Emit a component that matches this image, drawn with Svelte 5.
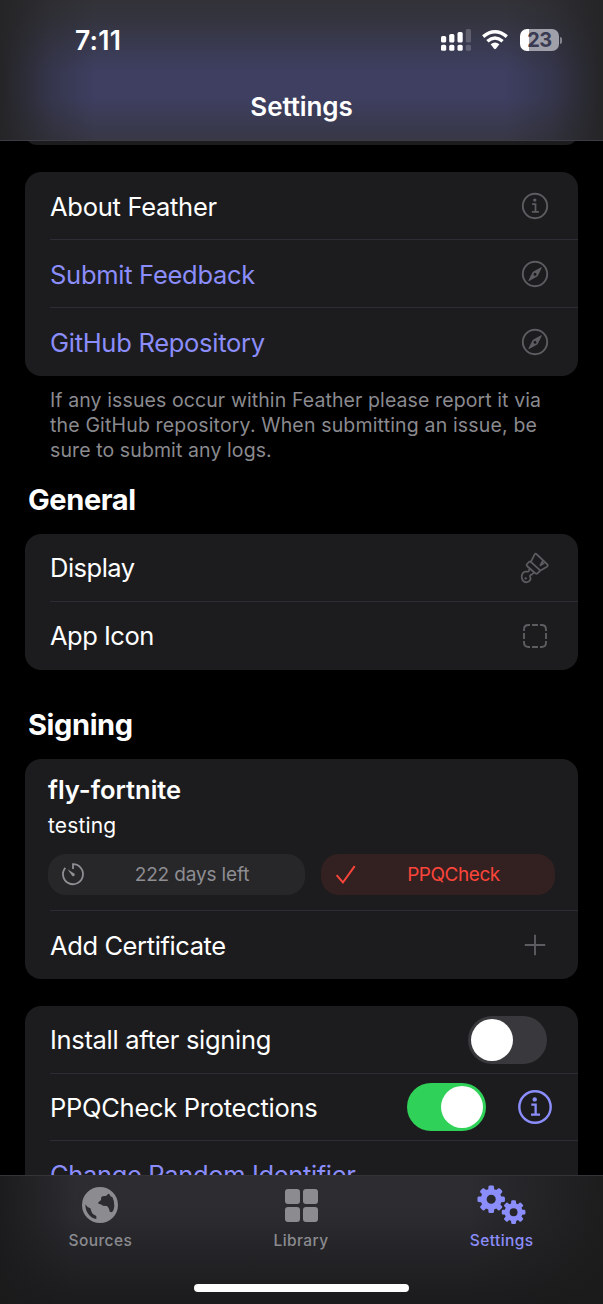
<script>
  // Outline of a cog with eight rounded teeth.
  function gear(cx, cy, r) {
    const teeth = 8;
    const step = (Math.PI * 2) / teeth;
    const inner = r * 0.76;
    const at = (radius, a) =>
      `${(cx + radius * Math.sin(a)).toFixed(2)} ${(cy - radius * Math.cos(a)).toFixed(2)}`;
    let d = '';
    for (let i = 0; i < teeth; i++) {
      const a = i * step;
      d += `${i ? 'L' : 'M'}${at(inner, a - 0.28)}L${at(r * 0.93, a - 0.22)}Q${at(r * 1.01, a - 0.19)} ${at(r, a - 0.1)}L${at(r, a + 0.1)}Q${at(r * 1.01, a + 0.19)} ${at(r * 0.93, a + 0.22)}L${at(inner, a + 0.28)}`;
    }
    const h = r * 0.33;
    return `${d}ZM${cx - h} ${cy}a${h} ${h} 0 1 0 ${2 * h} 0a${h} ${h} 0 1 0 ${-2 * h} 0Z`;
  }

  const links = [
    { label: 'About Feather', icon: 'info', accent: false, ls: -0.28 },
    { label: 'Submit Feedback', icon: 'compass', accent: true, ls: -0.28 },
    { label: 'GitHub Repository', icon: 'compass', accent: true, ls: -0.28 }
  ];
  const general = [
    { label: 'Display', icon: 'brush', ls: -0.5 },
    { label: 'App Icon', icon: 'dashed', ls: -0.5 }
  ];
</script>

{#snippet icon(name)}
  {#if name === 'info'}
    <svg class="icon" viewBox="0 0 28 28">
      <circle cx="14" cy="14" r="12.2" stroke-width="1.9" />
      <circle class="dot" cx="13.8" cy="8.1" r="1.7" />
      <path d="M11.1 12.1h3.4v7.6M10.9 19.9h7" stroke-width="1.8" />
    </svg>
  {:else if name === 'compass'}
    <svg class="icon" viewBox="0 0 28 28">
      <circle cx="14" cy="14" r="12.2" stroke-width="1.9" />
      <path class="dot" fill-rule="evenodd" d="M20.1 7.3Q21.1 7 20.7 8L17 15.5Q16.6 16.4 15.8 16.8L8.2 20.9Q7 21.3 7.5 20.2L11.3 12.7Q11.7 12 12.4 11.5ZM14 12.7a1.5 1.5 0 1 0 0 3a1.5 1.5 0 1 0 0-3Z" />
    </svg>
  {:else if name === 'brush'}
    <svg class="brush" viewBox="65 36 84 96">
      <path d="M83 72L90 65Q94 64 97 68L120 89Q123 93 119 96L114 100Q111 103 107 99L83 78Q80 75 83 72ZM95 65L106 43Q108 39 111 42L144 73Q147 77 143 80L122 92M131 61L123 76L133 70M90 85L89 92Q88 96 83 95L79 95Q69 96 67 109Q67 125 80 127Q91 126 94 117L92 109Q92 104 97 104L104 98" />
      <circle class="dot" cx="79" cy="115" r="3.5" />
    </svg>
  {:else if name === 'dashed'}
    <svg class="dashed" viewBox="0 0 24 24">
      <path d="M1 7V5.5Q1 1 5.5 1H7M17 1h1.5Q23 1 23 5.5V7M23 17v1.5Q23 23 18.500 23H17M7 23H5.500Q1 23 1 18.500V17M9 1h6M9 23h6M1 9v6M23 9v6" />
    </svg>
  {:else if name === 'plus'}
    <svg class="plus" viewBox="0 0 22 22"><path d="M11 .8v20.400M.8 11h20.400" /></svg>
  {/if}
{/snippet}

<div class="screen">
  <header>
    <div class="status">
      <span class="time">7:11</span>
      <div class="indicators">
        <svg class="signal" viewBox="0 0 30 22">
          <rect x="0" y="7" width="5.200" height="6.500" rx="1.600" /><rect x="0" y="15.800" width="5.200" height="6" rx="1.600" />
          <rect x="8.200" y="5" width="5.200" height="8.500" rx="1.600" /><rect x="8.200" y="15.800" width="5.200" height="6" rx="1.600" />
          <rect x="16.500" y="3" width="5.200" height="10.500" rx="1.600" /><rect x="16.500" y="15.800" width="5.200" height="6" rx="1.600" />
          <g opacity=".2"><rect x="24.800" y="0" width="5.200" height="13.500" rx="1.600" /><rect x="24.800" y="15.800" width="5.200" height="6" rx="1.600" /></g>
        </svg>
        <svg class="wifi" viewBox="0 0 26 20">
          <path class="arc" d="M1.200 6.600Q13-3.200 24.800 6.600M5.400 11.200Q13 4.800 20.600 11.200" />
          <path d="M8.600 14.200Q13 11 17.400 14.200L13.900 18.800Q13 19.600 12.100 18.800Z" />
        </svg>
        <div class="battery"><span>23</span></div>
        <i class="nub"></i>
      </div>
    </div>
    <h1>Settings</h1>
  </header>

  <main>
    <div class="card previous"></div>

    <section class="card links">
      {#each links as row}
        <div class="row" class:accent={row.accent}>
          <span style="letter-spacing: {row.ls}px">{row.label}</span>
          {@render icon(row.icon)}
        </div>
      {/each}
    </section>
    <p class="note">
      <span class="l1">If any issues occur within Feather please report it via</span><br />
      <span class="l2">the GitHub repository. When submitting an issue, be</span><br />
      <span class="l3">sure to submit any logs.</span>
    </p>

    <h2 class="h-general">General</h2>
    <section class="card">
      {#each general as row}
        <div class="row">
          <span style="letter-spacing: {row.ls}px">{row.label}</span>
          {@render icon(row.icon)}
        </div>
      {/each}
    </section>

    <h2 class="h-signing">Signing</h2>
    <section class="card">
      <div class="cert">
        <strong>fly-fortnite</strong>
        <span class="sub">testing</span>
        <div class="pills">
          <div class="pill days">
            <svg viewBox="0 0 24 24">
              <path d="M12 7V2.200A10 10 0 1 1 4.300 5.800" />
              <path class="dot" d="M6.500 7.300L13.600 11.800A1.700 1.700 0 0 1 11.300 14.100Z" />
            </svg>
            <span>222 days left</span>
          </div>
          <div class="pill check">
            <svg viewBox="0 0 24 24"><path d="M2.600 13.200L8.900 20.500L20.700 4.200" /></svg>
            <span>PPQCheck</span>
          </div>
        </div>
      </div>
      <div class="row">
        <span class="add">Add Certificate</span>
        {@render icon('plus')}
      </div>
    </section>

    <section class="card options">
      <div class="row toggle-row">
        <span class="install">Install after signing</span>
        <div class="switch"><i></i></div>
      </div>
      <div class="row protect">
        <span class="ppq">PPQCheck Protections</span>
        <div class="controls">
          <div class="switch on"><i></i></div>
          {@render icon('info')}
        </div>
      </div>
      <div class="row accent"><span class="change">Change Random Identifier</span></div>
    </section>
  </main>

  <nav>
    <div class="tabs">
      <div class="tab">
        <svg class="globe" viewBox="246 141 108 108">
          <path fill-rule="evenodd" d="M300 141a54 54 0 1 0 0 108a54 54 0 1 0 0-108ZM294 188L303 180L304 171Q308 167 318 168L325 161L330 164L331 169L337 171Q344 184 343 199Q342 211 336 217L329 215Q327 201 320 198L309 197Q304 192 296 191ZM256 193Q260 201 271 205L276 219Q279 223 289 228L289 237Q275 236 265 222Q256 210 256 193Z" />
        </svg>
        <span>Sources</span>
      </div>
      <div class="tab">
        <svg class="grid" viewBox="0 0 33 33">
          <rect width="15" height="15" rx="3" /><rect x="18" width="15" height="15" rx="3" />
          <rect y="18" width="15" height="15" rx="3" /><rect x="18" y="18" width="15" height="15" rx="3" />
        </svg>
        <span>Library</span>
      </div>
      <div class="tab active">
        <svg class="gears" viewBox="0 0 50 40">
          <path fill-rule="evenodd" d={gear(14.2, 14.3, 13.8)} />
          <path fill-rule="evenodd" d={gear(36.600, 27.200, 11.900)} />
        </svg>
        <span>Settings</span>
      </div>
    </div>
    <div class="home"></div>
  </nav>
</div>

<style>
  :global(body) { background: #000; }
  * { box-sizing: border-box; }
  .screen {
    display: flex;
    flex-direction: column;
    width: 603px;
    height: 1304px;
    overflow: hidden;
    background: #000;
    color: #fff;
    font-family: Inter, 'Liberation Sans', sans-serif;
  }
  svg { display: block; flex: none; overflow: visible; }
  header {
    flex: none;
    height: 141px;
    background:
      linear-gradient(90deg, #252527 0, rgba(37, 37, 39, 0.78) 20px, rgba(37, 37, 39, 0.35) 52px, rgba(37, 37, 39, 0) 95px, rgba(37, 37, 39, 0) 505px, rgba(37, 37, 39, 0.35) 551px, rgba(37, 37, 39, 0.78) 583px, #252527 100%),
      linear-gradient(#323238 0, #34343f 20px, #393a50 45px, #3e3f61 72px, #3e3f61 98px, #3a3a50 124px, #373746 100%);
    border-bottom: 1px solid #3c3c45;
  }
  .status {
    display: flex;
    justify-content: space-between;
    align-items: center;
    height: 80px;
    padding: 0 41px 0 75px;
  }
  .time { font-size: 26.500px; font-weight: 600; letter-spacing: 0.2px; }
  .indicators { display: flex; align-items: center; }
  .signal { width: 30px; height: 22px; fill: #fff; margin-right: 11px; }
  .wifi { width: 26px; height: 20px; fill: #fff; margin-right: 12px; }
  .arc { fill: none; stroke: #fff; stroke-width: 3.400; }
  .battery {
    display: flex;
    justify-content: center;
    align-items: center;
    width: 39px;
    height: 22px;
    border-radius: 7px;
    background: linear-gradient(90deg, #fff 9px, #a0a0ab 9px);
    color: #3a3b52;
    font-size: 20px;
    font-weight: 700;
    letter-spacing: -0.5px;
  }
  .nub { width: 2px; height: 7px; margin-left: 1px; border-radius: 0 3px 3px 0; background: #85858f; }
  h1 {
    margin: 10px 0 0;
    text-align: center;
    font-size: 26px;
    line-height: 34px;
    font-weight: 600;
    letter-spacing: -0.1px;
  }
  main { flex: 1; min-height: 0; overflow: hidden; padding: 0 25px; }
  .card { border-radius: 16px; background: #1c1c1e; overflow: hidden; }
  .previous { height: 24px; margin-top: -20px; }
  .links { margin-top: 27px; }
  .row {
    display: flex;
    align-items: center;
    justify-content: space-between;
    height: 68px;
    padding: 0 29px 0 25px;
    font-size: 25.500px;
    white-space: nowrap;
  }
  .row:not(:last-child), .cert { background: linear-gradient(#2d2d35, #2d2d35) 25px 100% / 100% 1px no-repeat; }
  .accent { color: #8b8dfa; }
  .icon { width: 28px; height: 28px; fill: none; stroke: #5c5c61; }
  .icon .dot { fill: #5c5c61; stroke: none; }
  .brush { width: 28px; height: 32px; fill: none; stroke: #5c5c61; stroke-width: 5.200; stroke-linejoin: round; stroke-linecap: round; }
  .brush .dot { fill: #5c5c61; stroke: none; }
  .dashed { width: 24px; height: 24px; margin-right: 2px; fill: none; stroke: #5c5c61; stroke-width: 1.900; }
  .plus { width: 22px; height: 22px; margin-right: 3px; stroke: #5c5c61; stroke-width: 1.900; }
  .note {
    margin: 12px 0 0;
    padding-left: 25px;
    height: 74px;
    color: #8a8a8f;
    font-size: 19.500px;
    line-height: 25px;
    white-space: nowrap;
    letter-spacing: 0.100px;
  }
  .l2 { letter-spacing: 0.160px; }
  h2 { margin: 0 0 0 3px; font-size: 29px; font-weight: 700; line-height: 40px; letter-spacing: -0.4px; }
  .h-general { margin-top: 18px; margin-bottom: 13.500px; }
  .h-signing { margin-top: 35.500px; margin-bottom: 13.500px; }
  .cert { height: 152.500px; padding: 15.500px 23px 0; }
  .cert strong { display: block; font-size: 25.500px; line-height: 32px; font-weight: 600; }
  .sub { display: block; margin-top: 6px; font-size: 21px; line-height: 27px; letter-spacing: 0.150px; }
  .pills { display: flex; gap: 16px; margin-top: 14.500px; }
  .pill { display: flex; align-items: center; height: 41px; padding-left: 13px; border-radius: 18px; background: #272729; color: #8e8e93; font-size: 19px; }
  .pill svg { width: 24px; height: 24px; fill: none; stroke: currentColor; stroke-width: 1.800; }
  .pill .dot { fill: currentColor; stroke: none; }
  .pill span { flex: 1; text-align: center; }
  .days { width: 257px; padding-right: 6px; }
  .days span { letter-spacing: -0.150px; }
  .check { width: 234px; padding-right: 6px; background: #332021; color: #fa453a; }
  .check span { letter-spacing: -0.450px; }
  .check svg { stroke-width: 2; }
  .add { letter-spacing: -0.400px; }
  .install { letter-spacing: -0.310px; }
  .ppq { letter-spacing: -0.280px; }
  .change { letter-spacing: -0.350px; }
  .options { margin-top: 27px; }
  .options .row { height: 67.500px; }
  .switch { width: 79px; height: 48px; padding: 3px; border-radius: 24px; background: #39393d; }
  .switch i { display: block; width: 42px; height: 42px; border-radius: 50%; background: #fff; }
  .on { display: flex; justify-content: flex-end; background: #30d158; }
  .toggle-row { padding-right: 31px; }
  .controls { display: flex; align-items: center; gap: 31px; }
  .protect { padding-right: 25px; }
  .protect .icon { width: 36px; height: 36px; margin-right: 0; stroke: #8b8dfa; }
  .protect .icon :global(.dot) { fill: #8b8dfa; }
  nav {
    flex: none;
    height: 129px;
    border-top: 1px solid #333338;
    background:
      linear-gradient(90deg, rgba(26, 26, 27, 0.900) 0, rgba(30, 30, 31, 0) 75px, rgba(30, 30, 31, 0) 470px, rgba(26, 26, 26, 0.850) 100%),
      linear-gradient(#2c2c31 0, #2b2b30 40px, #1d1d1f 115px, #1b1b1d 100%);
  }
  .tabs { display: flex; height: 108px; padding: 9px 1px 0 0; }
  .tab { display: flex; flex: 1; flex-direction: column; align-items: center; color: #8b8b90; font-size: 15.500px; font-weight: 500; line-height: 20px; letter-spacing: 0.400px; }
  .tab svg { fill: currentColor; margin-bottom: 9px; }
  .tab .globe { width: 36px; height: 36px; margin-top: 2px; margin-bottom: 8px; }
  .tab .grid { width: 33px; height: 33px; margin-top: 4px; }
  .tab .gears { width: 50px; height: 40px; margin-top: 0; margin-bottom: 6px; }
  .active { color: #8b8dfa; }
  .home { width: 215px; height: 8px; margin: 0 auto; border-radius: 4px; background: #fff; }
</style>
